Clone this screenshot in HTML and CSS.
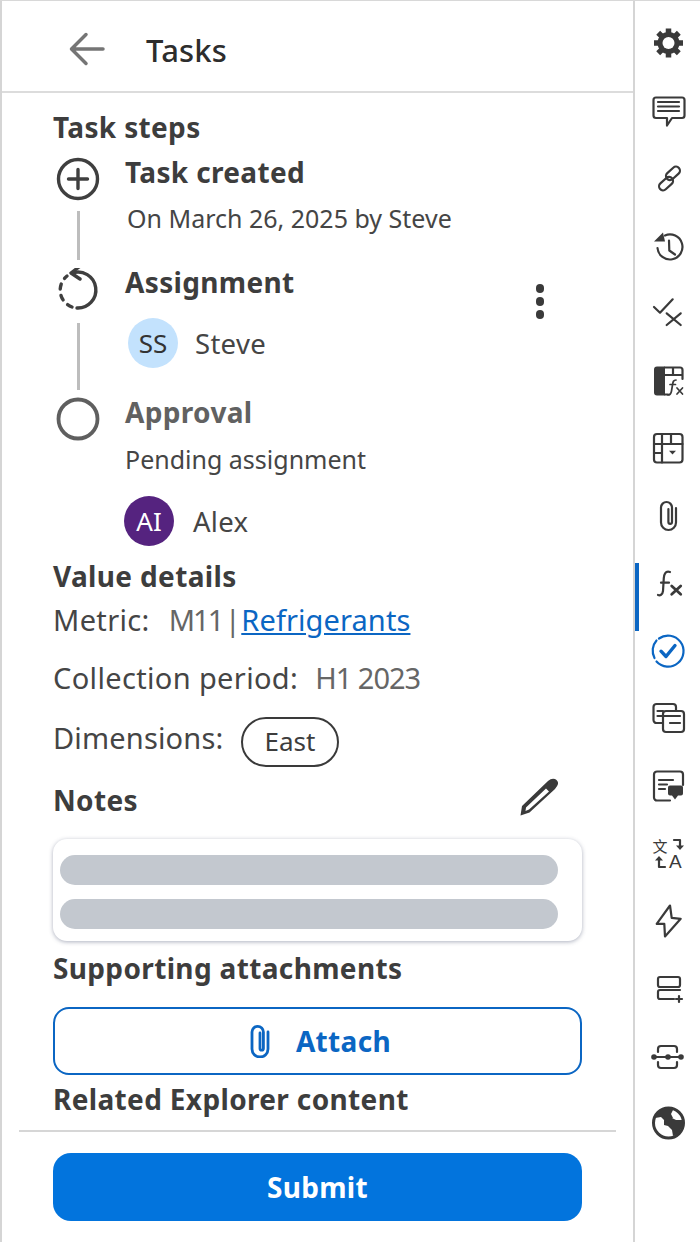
FILE: index.html
```html
<!DOCTYPE html>
<html lang="en">
<head>
<meta charset="utf-8">
<title>Tasks</title>
<link rel="stylesheet" href="styles.css">
</head>
<body>
<div class="app">
  <main class="panel">
    <header class="topbar">
      <svg class="back" viewBox="0 0 36 36"><path d="M34 18H3M17 3.500 2.500 18 17 32.500"/></svg>
      <h1 class="title">Tasks</h1>
    </header>
    <div class="content">
      <h2 class="heading steps-heading">Task steps</h2>
      <section class="step step-created">
        <div class="rail rail-created">
          <svg class="rail-icon" viewBox="-22 -22 44 44"><circle r="19.500" class="ic"/><path class="ic" d="M-9.500 0H9.500M0-9.500V9.500"/></svg>
          <span class="rail-line line-one"></span>
        </div>
        <div class="step-body">
          <h3 class="step-title">Task created</h3>
          <p class="body-text created-by">On March 26, 2025 by Steve</p>
        </div>
      </section>
      <section class="step step-assign">
        <div class="rail rail-assign">
          <svg class="rail-icon" viewBox="-22 -22 44 44"><path class="ic" d="M-6-17A18 18 0 1 1-1 18"/><path class="ic" d="M1-23-7-17 2-11"/><path class="ic dash" d="M-6 17A18 18 0 0 1-11-14"/></svg>
          <span class="rail-line line-two"></span>
        </div>
        <div class="step-body">
          <h3 class="step-title">Assignment</h3>
          <div class="person person-steve"><span class="avatar avatar-light">SS</span><span class="person-name">Steve</span></div>
        </div>
        <div class="kebab"><i></i><i></i><i></i></div>
      </section>
      <section class="step step-approval">
        <div class="rail rail-approval">
          <svg class="rail-icon" viewBox="-22 -22 44 44"><circle r="19.500" class="ic muted"/></svg>
        </div>
        <div class="step-body">
          <h3 class="step-title muted-text">Approval</h3>
          <p class="body-text pending">Pending assignment</p>
          <div class="person person-alex"><span class="avatar avatar-dark">AI</span><span class="person-name">Alex</span></div>
        </div>
      </section>
      <h2 class="heading value-heading">Value details</h2>
      <p class="meta meta-metric"><span class="label">Metric:</span><span class="value value-code">M11 | <a class="link" href="#">Refrigerants</a></span></p>
      <p class="meta meta-period"><span class="label label-period">Collection period:</span><span class="value value-tight">H1 2023</span></p>
      <div class="meta meta-dim"><span class="label label-dim">Dimensions:</span><span class="chip">East</span></div>
      <div class="notes-head">
        <h2 class="heading">Notes</h2>
        <svg class="pencil" viewBox="0 0 40 40"><path fill-rule="evenodd" d="M29 4Q32.500.8 36 2 39.500 4 39 7 38.500 9 36 12L10.500 35.500 1.500 38.500 3 29ZM27 11.500 30 14.500 10 32.500 6.500 34 7 30.500Z"/></svg>
      </div>
      <div class="notes-card">
        <span class="redacted"></span>
        <span class="redacted"></span>
      </div>
      <h2 class="heading attach-heading">Supporting attachments</h2>
      <button class="btn-attach" type="button">
        <svg class="attach-icon" viewBox="-10 -17 20 34"><path d="M8-9V8a8 8 0 0 1-16 0V-9A5.700 5.700 0 0 1 3.400-9V7.500a1.700 1.700 0 0 1-3.400 0V-8"/></svg>
        <span>Attach</span>
      </button>
      <h2 class="heading related-heading">Related Explorer content</h2>
    </div>
    <footer class="footer">
      <button class="btn-submit" type="button">Submit</button>
    </footer>
  </main>
  <nav class="sidebar">
    <div class="tool"><svg viewBox="-20 -20 40 40"><g transform="translate(.5 0)"><path class="teeth" d="M0-14.500V14.500M-14.500 0H14.500M-10.300-10.300 10.300 10.300M-10.300 10.300 10.300-10.300"/><circle class="fill" r="11"/><circle class="hole" r="6"/></g></svg></div>
    <div class="tool"><svg viewBox="-20 -20 40 40"><path class="s" d="M-12-13.500H14a2.500 2.500 0 0 1 2.500 2.500V4.500A2.500 2.500 0 0 1 14 7H4L-1 14.500V7H-12A2.500 2.500 0 0 1-14.500 4.500V-11A2.500 2.500 0 0 1-12-13.500Z"/><path class="s" d="M-10-9H11M-10-4.500H11M-10 0H11"/></svg></div>
    <div class="tool"><svg viewBox="-20 -20 40 40"><g transform="translate(1.500 .5) rotate(-42)"><rect class="s" x="-14" y="-2.500" width="16" height="8" rx="4"/><rect class="s" x="-2" y="-5.500" width="16" height="8" rx="4"/></g></svg></div>
    <div class="tool"><svg viewBox="-20 -20 40 40"><path class="s" d="M-3-10.500A12.500 12.500 0 1 1-10.500 2"/><path class="fill" d="M-14-4.500H-3L-5-13.500Z"/><path class="s" d="M1-5.500 1.300 4.500 7 8.500"/></svg></div>
    <div class="tool"><svg viewBox="-20 -20 40 40"><path class="s" d="M-14-6-8-.3 4.700-13.700M-1.300.3 12.700 12M12.700.3-1.300 12"/></svg></div>
    <div class="tool"><svg viewBox="-20 -20 40 40"><path class="fill" d="M-3-14.500H-11a3 3 0 0 0-3 3V11.500a3 3 0 0 0 3 3H-3Z"/><path class="s" d="M-3-13.500H12a2.500 2.500 0 0 1 2.500 2.500V-2M-3-6H14.500M5-13.500V-6M-3 13.500H0"/><path class="s thin" d="M8-1C5-1 5 1 4.500 4L3.500 10C3 13 2 14 0 14M2 3.500H7.500M9 7 14.500 13M14.500 7 9 13"/></svg></div>
    <div class="tool"><svg viewBox="-20 -20 40 40"><rect class="s" x="-14" y="-14" width="28.500" height="28.500" rx="3"/><path class="s" d="M-14-4H14.500M-14 5H-6M-6-14V14.500M3-14V-4"/><path class="fill" d="M1 2.700H8L4.500 6.500Z"/></svg></div>
    <div class="tool"><svg viewBox="-20 -20 40 40"><path class="s" d="M8-8V6.500a7.500 7.500 0 0 1-15 0V-8.500a5.500 5.500 0 0 1 11 0V6a1.800 1.800 0 0 1-3.600 0V-7"/></svg></div>
    <div class="tool"><span class="marker"></span><svg viewBox="-20 -20 40 40"><path class="s" d="M2-11C-3-12.500-4-8-4.200-5L-5 8C-5.500 12-8 12.800-10 12M-7-.3H1"/><path class="s thick" d="M3.700 3 12.700 11.300M12.700 3 3.700 11.300"/></svg></div>
    <div class="tool"><svg viewBox="-20 -20 40 40"><path class="s blue" d="M-9-12.500A15.500 15.500 0 1 1-11.500 10.500M-13.500 7A15.500 15.500 0 0 1-11.500-10.500"/><path class="s blue heavy" d="M-7 .2-2 5.500 7-5.500"/></svg></div>
    <div class="tool"><svg viewBox="-20 -20 40 40"><path class="s" d="M-5 5H-11.500A3 3 0 0 1-14.500 2V-11A3 3 0 0 1-11.500-14H5A3 3 0 0 1 8-11V-8"/><rect class="s" x="-5" y="-7" width="21" height="21" rx="3"/><path class="s" d="M-10.500-7H-5M-10.500-2H12M2 5H12"/></svg></div>
    <div class="tool"><svg viewBox="-20 -20 40 40"><path class="s" d="M15-1V-11.500A3 3 0 0 0 12-14.500H-11A3 3 0 0 0-14-11.500V11.500A3 3 0 0 0-11 14.500H2"/><path class="s" d="M-9-6H5M-9-1.500H-1M-9 3H-3"/><path class="fill" d="M2-.5H13a2 2 0 0 1 2 2V7.500a2 2 0 0 1-2 2H10L7 13.500 4 9.500H2a2 2 0 0 1-2-2V1.500a2 2 0 0 1 2-2Z"/></svg></div>
    <div class="tool"><svg viewBox="-20 -20 40 40"><text class="glyph-cjk" x="-15.500" y="-1.500">文</text><text class="glyph-a" x="1" y="15">A</text><path class="s" d="M6-13H12V-7"/><path class="fill" d="M8-7.500H16L12-3Z"/><path class="s" d="M-3 14H-9V7"/><path class="fill" d="M-13 7.500H-5L-9 3Z"/></svg></div>
    <div class="tool"><svg viewBox="-20 -20 40 40"><path class="s" d="M2-15.500-11.300 2.800H-3.700L-3 15.500 12.700-2.200 3.700-3.200Z"/></svg></div>
    <div class="tool"><svg viewBox="-20 -20 40 40"><rect class="s" x="-10" y="-11" width="22" height="10" rx="2"/><path class="s" d="M12 2H-8A2 2 0 0 0-10 4V9A2 2 0 0 0-8 11H6"/><path class="s" d="M8 11H14M11 8V14"/></svg></div>
    <div class="tool"><svg viewBox="-20 -20 40 40"><path class="s" d="M-15 1H13M-10-4V-7A3 3 0 0 1-7-10H6A3 3 0 0 1 9-7V-4M-10 6V9A3 3 0 0 0-7 12H6A3 3 0 0 0 9 9V6"/><g class="fill"><circle cx="-14" cy="1" r="2.800"/><circle cy="1" r="2.800"/><circle cx="13" cy="1" r="2.800"/></g></svg></div>
    <div class="tool"><svg viewBox="-20 -20 40 40"><circle class="s globe" cx=".5" r="15"/><path class="fill" d="M-12-8C-8-13-3-15 3-15L5-13 3-9 5-5 1-3-3-2-7-6-13-5ZM-4-3 4-5 8-3 14-3 15 3 10 11 5 13 4 7 0 3-4 2Z"/></svg></div>
  </nav>
</div>
</body>
</html>
```

FILE: styles.css
```css
* { box-sizing: border-box; }
html, body { margin: 0; padding: 0; background: #fff; }
body { font-family: "Noto Sans", "Liberation Sans", sans-serif; color: #3d3d3d; }
h1, h2, h3, p { margin: 0; }
.app { display: flex; width: 700px; height: 1242px; border-top: 1px solid #d8d8d8; overflow: hidden; }
.panel { width: 635px; height: 100%; display: flex; flex-direction: column; border-left: 2px solid #d5d5d5; border-right: 2px solid #d5d5d5; }
.topbar { height: 92px; flex: none; display: flex; align-items: center; border-bottom: 2px solid #dcdcdc; padding: 6px 0 0 67px; }
.back { width: 36px; height: 36px; margin-right: 41px; }
.back path { fill: none; stroke: #757575; stroke-width: 3.500; stroke-linecap: round; stroke-linejoin: round; }
.title { font-size: 31px; line-height: 40px; font-weight: 500; color: #2d2d2d; margin-top: 2px; letter-spacing: .2px; }
.content { flex: 1; padding-left: 51px; padding-right: 51px; }
.heading { font-size: 28px; line-height: 36px; font-weight: 700; color: #3d3d3d; letter-spacing: .35px; }
.steps-heading { margin-top: 16px; }
.step { display: flex; }
.rail { width: 72px; flex: none; display: flex; flex-direction: column; align-items: center; padding-right: 22px; }
.rail-created { padding-top: 4px; }
.rail-assign { padding-top: 5px; }
.rail-approval { padding-top: 4px; }
.rail-icon { width: 44px; height: 44px; flex: none; }
.ic { fill: none; stroke: #3f3f3f; stroke-width: 3.400; stroke-linecap: round; stroke-linejoin: round; }
.ic.dash { stroke-dasharray: 5 6.500; }
.ic.muted { stroke: #5f5f5f; stroke-width: 3.800; }
.rail-line { width: 3px; background: #bdbdbd; }
.line-one { height: 49px; margin-top: 10px; }
.line-two { height: 67px; margin-top: 11px; }
.step-created { margin-top: 8px; height: 110px; }
.step-assign { height: 130px; }
.step-approval { height: 165px; }
.step-body { flex: 1; padding-top: 1px; }
.step-title { font-size: 28px; line-height: 36px; font-weight: 700; letter-spacing: .35px; }
.muted-text { color: #616161; }
.body-text { font-size: 25px; line-height: 32px; color: #454545; }
.person-name { font-size: 27.500px; line-height: 36px; color: #454545; letter-spacing: .3px; padding-top: 2px; }
.created-by { margin-top: 12px; padding-left: 2px; }
.person { display: flex; align-items: center; }
.person-steve { margin-top: 18px; padding-left: 3px; }
.person-steve .avatar { margin-right: 17px; }
.person-alex { margin-top: 21px; margin-left: -1px; }
.person-alex .avatar { margin-right: 19px; }
.avatar { width: 50px; height: 50px; border-radius: 50%; display: flex; align-items: center; justify-content: center; font-size: 26px; flex: none; }
.avatar-light { background: #c3e2fd; color: #333; }
.avatar-dark { background: #55237f; color: #fff; }
.pending { margin-top: 13px; }
.kebab { width: 40px; display: flex; flex-direction: column; align-items: center; gap: 4.500px; padding-top: 21px; margin-right: 22px; flex: none; }
.kebab i { width: 8.500px; height: 8.500px; border-radius: 50%; background: #3a3a3a; }
.meta { display: flex; align-items: center; font-size: 29px; line-height: 36px; color: #454545; letter-spacing: .35px; }
.label { margin-right: 19px; }
.label-period { margin-right: 17px; }
.value { color: #666; letter-spacing: 0; }
.value-code { letter-spacing: -2px; word-spacing: -3px; }
.value-tight { letter-spacing: -1px; }
.link { color: #0b66c3; text-decoration: underline; letter-spacing: .1px; word-spacing: 0; }
.meta-metric { margin-top: 8px; }
.meta-period { margin-top: 22px; }
.meta-dim { margin-top: 21px; align-items: flex-start; }
.label-dim { margin-top: 3px; margin-right: 18px; letter-spacing: .17px; }
.chip { height: 50px; border: 2px solid #3a3a3a; border-radius: 25px; padding: 0 22px 2px 21px; display: flex; align-items: center; font-size: 26px; color: #3d3d3d; letter-spacing: 0; }
.notes-head { display: flex; justify-content: space-between; align-items: center; margin-top: 10px; height: 46px; }
.pencil { width: 40px; height: 40px; margin: 0 23px 6px 0; fill: #3a3a3a; }
.notes-card { margin-top: 16px; height: 102px; background: #fff; border-radius: 14px; box-shadow: 0 1px 4px rgba(70, 80, 110, .45); padding: 16px 24px 0 7px; display: flex; flex-direction: column; gap: 14px; }
.redacted { height: 30px; border-radius: 15px; background: #c3c8cf; display: block; }
.attach-heading { margin-top: 9px; }
.btn-attach { margin-top: 21px; width: 100%; height: 68px; background: #fff; border: 2px solid #0b66c3; border-radius: 16px; color: #0b66c3; font: 700 28px/1 "Noto Sans", "Liberation Sans", sans-serif; letter-spacing: .35px; display: flex; align-items: center; justify-content: center; gap: 26px; padding: 0 0 0 6px; }
.attach-icon { width: 20px; height: 34px; }
.attach-icon path { fill: none; stroke: #0b66c3; stroke-width: 2.800; stroke-linecap: round; }
.related-heading { margin-top: 6px; }
.footer { margin-left: 17px; margin-right: 17px; border-top: 2px solid #d6d6d6; height: 112px; padding: 21px 34px 0; flex: none; }
.btn-submit { width: 100%; height: 68px; background: #0274dd; border: 0; border-radius: 18px; color: #fff; font: 700 28px/1 "Noto Sans", "Liberation Sans", sans-serif; letter-spacing: .3px; }
.sidebar { flex: 1; display: flex; flex-direction: column; padding-top: 8.250px; }
.tool { height: 67.500px; display: flex; align-items: center; justify-content: center; flex: none; position: relative; padding-left: 1px; }
.tool svg { width: 40px; height: 40px; }
.tool .s { fill: none; stroke: #3a3a3a; stroke-width: 2.200; stroke-linecap: round; stroke-linejoin: round; }
.tool .thin { stroke-width: 1.700; }
.tool .thick { stroke-width: 2.800; }
.tool .blue { stroke: #0b66c3; }
.tool .heavy { stroke-width: 3.400; }
.tool .globe { stroke-width: 3; }
.tool .fill { fill: #3a3a3a; }
.tool .hole { fill: #fff; }
.tool .teeth { fill: none; stroke: #3a3a3a; stroke-width: 5.500; }
.marker { position: absolute; left: 0; top: 14px; width: 4px; height: 68px; background: #0b66c3; }
.glyph-cjk { font: 15px "Noto Sans CJK SC", sans-serif; fill: #3a3a3a; }
.glyph-a { font: 19px "Liberation Sans", sans-serif; fill: #3a3a3a; }
```
